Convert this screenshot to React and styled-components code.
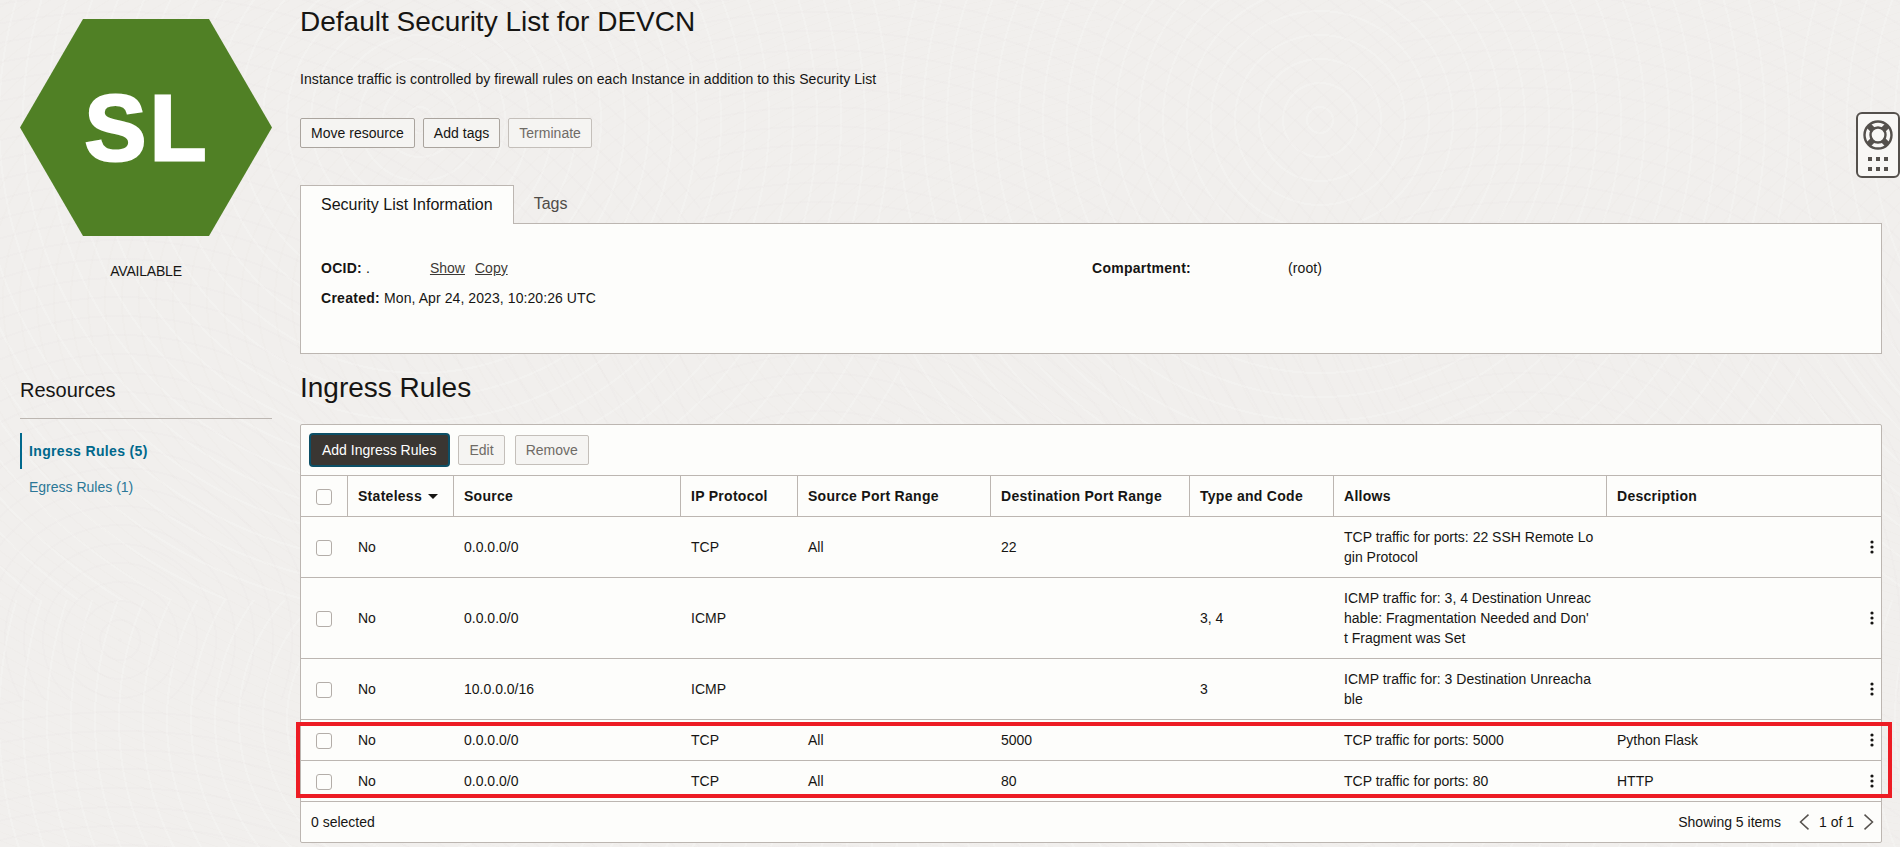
import styled, { createGlobalStyle } from "styled-components";

const FONT = '"Liberation Sans", Arial, sans-serif';
const INK = "#161513";
const LINE = "#bcb6b1";

const GlobalStyle = createGlobalStyle`
  html, body {
    margin: 0;
    height: 847px;
    overflow: hidden;
  }
  body {
    font: 14px/20px ${FONT};
    color: ${INK};
    background-color: #f1efed;
    background-image:
      repeating-radial-gradient(ellipse at 420px 120px, rgba(255,255,255,0) 0 12px, rgba(255,255,255,.16) 12px 14px, rgba(255,255,255,0) 14px 24px),
      repeating-radial-gradient(ellipse at 1500px 300px, rgba(228,225,221,.12) 0 2px, rgba(228,225,221,0) 2px 17px),
      repeating-radial-gradient(circle at 120px 640px, rgba(228,225,221,.14) 0 2px, rgba(228,225,221,0) 2px 19px);
    background-size: 900px 600px, 1100px 847px, 700px 700px;
  }
  * {
    box-sizing: border-box;
  }
`;

const Page = styled.div`
  display: flex;
  width: 1900px;
  height: 847px;
  padding-right: 18px;
`;

const Sidebar = styled.aside`
  flex: none;
  width: 252px;
  margin: 0 28px 0 20px;
  padding-top: 19px;
`;

const Hexagon = styled.div`
  display: flex;
  align-items: center;
  justify-content: center;
  height: 217px;
  padding-left: 3px;
  background: #508025;
  clip-path: polygon(25% 0, 75% 0, 100% 50%, 75% 100%, 25% 100%, 0 50%);
  color: #fff;
  font-size: 92px;
  font-weight: 700;
  line-height: 1;
  letter-spacing: 4px;
  -webkit-text-stroke: 3px #fff;
`;

const Status = styled.div`
  margin-top: 25px;
  text-align: center;
  letter-spacing: -0.2px;
`;

const ResourcesTitle = styled.h2`
  margin: 97px 0 0;
  padding-bottom: 16px;
  border-bottom: 1px solid ${LINE};
  font-size: 20px;
  font-weight: 400;
  line-height: 24px;
`;

const SideNav = styled.nav`
  display: flex;
  flex-direction: column;
  margin-top: 14px;
`;

const SideLink = styled.a`
  height: 36px;
  padding-left: ${({ $active }) => ($active ? "7px" : "9px")};
  border-left: ${({ $active }) => ($active ? "2px solid #00688c" : "none")};
  color: ${({ $active }) => ($active ? "#00688c" : "#2b7797")};
  font-weight: ${({ $active }) => ($active ? 700 : 400)};
  letter-spacing: ${({ $active }) => ($active ? "0.35px" : "0")};
  line-height: 36px;
`;

const Main = styled.main`
  flex: 1;
  min-width: 0;
  position: relative;
`;

const Title = styled.h1`
  margin: 0;
  font-size: 28px;
  font-weight: 400;
  line-height: 44px;
`;

const Lead = styled.p`
  margin: 25px 0 0;
  letter-spacing: 0.07px;
`;

const ButtonRow = styled.div`
  display: flex;
  gap: 8px;
  margin-top: 29px;
`;

const Button = styled.button`
  height: 30px;
  padding: 0 10px;
  border: 1px solid ${({ $disabled }) => ($disabled ? "#c4bfba" : "#aaa49e")};
  border-radius: 2px;
  background: #f5f4f2;
  color: ${({ $disabled }) => ($disabled ? "#6f6b66" : INK)};
  font: 14px ${FONT};
  letter-spacing: 0.02px;
`;

const PrimaryButton = styled.button`
  height: 30px;
  padding: 0 12px 0 11px;
  border: none;
  border-radius: 2px;
  background: #3a3632;
  box-shadow: 0 0 0 2px #0c4f66;
  color: #fff;
  font: 14px ${FONT};
`;

const Tabs = styled.div`
  display: flex;
  height: 39px;
  margin-top: 37px;
  border-bottom: 1px solid ${LINE};
`;

const Tab = styled.div`
  height: 39px;
  padding: 0 20px;
  color: ${({ $active }) => ($active ? INK : "#4f4b47")};
  line-height: 37px;
  font-size: 16px;
  ${({ $active }) =>
    $active &&
    `
    background: #fdfdfb;
    border: 1px solid ${LINE};
    border-bottom: none;
  `}
`;

const InfoPanel = styled.section`
  display: grid;
  grid-template-columns: 771px 1fr;
  grid-auto-rows: 20px;
  row-gap: 10px;
  height: 130px;
  padding: 34px 20px 0;
  background: #fdfdfb;
  border: 1px solid ${LINE};
  border-top: none;
`;

const Field = styled.div`
  display: flex;
  white-space: pre;
`;

const Label = styled.strong`
  margin-right: 4px;
  letter-spacing: 0.28px;
`;

const Mask = styled.span`
  width: ${({ $w }) => $w}px;
`;

const InfoLink = styled.a`
  margin-right: 10px;
  color: #3d3a36;
  text-decoration: underline;
`;

const InfoValue = styled.span`
  letter-spacing: 0.08px;
`;

const SectionTitle = styled.h2`
  margin: 14px 0 16px;
  font-size: 28px;
  font-weight: 400;
  line-height: 40px;
`;

const TableCard = styled.section`
  position: relative;
  width: 1582px;
  height: 419px;
  background: #fdfdfb;
  border: 1px solid ${LINE};
  border-radius: 2px;
`;

const Toolbar = styled.div`
  display: flex;
  align-items: center;
  gap: 10px;
  height: 51px;
  padding: 0 10px;
  border-bottom: 1px solid ${LINE};
`;

const RulesTable = styled.table`
  width: 1580px;
  table-layout: fixed;
  border-collapse: separate;
  border-spacing: 0;
`;

const HeadCell = styled.th`
  height: 41px;
  padding: 0 10px;
  border-bottom: 1px solid ${LINE};
  border-left: 1px solid ${LINE};
  font-weight: 700;
  letter-spacing: 0.28px;
  text-align: left;
  white-space: nowrap;
`;

const PlainHeadCell = styled(HeadCell)`
  padding: 0;
  border-left: none;
`;

const Cell = styled.td`
  padding: 10px 11px;
  border-bottom: 1px solid ${LINE};
  vertical-align: middle;
  word-break: break-all;
  white-space: pre-line;
`;

const CheckCell = styled(Cell)`
  padding: 0;
  text-align: center;
`;

const KebabCell = styled(Cell)`
  padding: 0;
`;

const Check = styled.span`
  display: block;
  width: 16px;
  height: 16px;
  margin: 2px 0 0 15px;
  background: #fdfdfb;
  border: 1px solid #b3ada8;
  border-radius: 3px;
`;

const Caret = styled.span`
  display: inline-block;
  margin: 0 0 2px 6px;
  border-top: 5px solid ${INK};
  border-left: 5px solid transparent;
  border-right: 5px solid transparent;
  vertical-align: middle;
`;

const KebabIcon = styled.svg`
  display: block;
  width: 4px;
  height: 14px;
  margin-left: 20px;
`;

const Footer = styled.div`
  display: flex;
  align-items: center;
  justify-content: space-between;
  height: 40px;
  padding: 0 7px 0 10px;
`;

const Pager = styled.div`
  display: flex;
  align-items: center;
`;

const PagerText = styled.span`
  margin: 0 10px;
`;

const Chevron = styled.svg`
  width: 10px;
  height: 16px;
  margin-left: ${({ $first }) => ($first ? "18px" : "0")};
  fill: none;
  stroke: #55514d;
  stroke-width: 1.5;
`;

const Highlight = styled.div`
  position: absolute;
  top: 297px;
  left: -5px;
  width: 1596px;
  height: 76px;
  border: 4px solid #ed1c24;
  pointer-events: none;
`;

const HelpWidget = styled.div`
  position: fixed;
  top: 112px;
  right: 0;
  display: flex;
  flex-direction: column;
  align-items: center;
  gap: 7px;
  width: 44px;
  height: 66px;
  padding-top: 6px;
  background: #f8f7f5;
  border: 2px solid #54504c;
  border-radius: 6px;
`;

const HelpSvg = styled.svg`
  display: block;
  flex: none;
`;

const COLUMNS = [46, 106, 227, 117, 193, 199, 144, 273, 244, 31];

const RULES = [
  { source: "0.0.0.0/0", protocol: "TCP", srcPort: "All", destPort: "22", type: "", allows: "TCP traffic for ports: 22 SSH Remote Login Protocol", description: "" },
  { source: "0.0.0.0/0", protocol: "ICMP", srcPort: "", destPort: "", type: "3, 4", allows: "ICMP traffic for: 3, 4 Destination Unreachable: Fragmentation Needed and Don'\nt Fragment was Set", description: "" },
  { source: "10.0.0.0/16", protocol: "ICMP", srcPort: "", destPort: "", type: "3", allows: "ICMP traffic for: 3 Destination Unreachable", description: "" },
  { source: "0.0.0.0/0", protocol: "TCP", srcPort: "All", destPort: "5000", type: "", allows: "TCP traffic for ports: 5000", description: "Python Flask" },
  { source: "0.0.0.0/0", protocol: "TCP", srcPort: "All", destPort: "80", type: "", allows: "TCP traffic for ports: 80", description: "HTTP" },
];

function Kebab() {
  return (
    <KebabIcon viewBox="0 0 4 14" fill="#161513">
      <circle cx="2" cy="2" r="1.6" />
      <circle cx="2" cy="7" r="1.6" />
      <circle cx="2" cy="12" r="1.6" />
    </KebabIcon>
  );
}

function LifeRing() {
  return (
    <HelpSvg width="30" height="30" viewBox="0 0 30 30" fill="none" stroke="#54504c">
      <circle cx="15" cy="15" r="13.5" strokeWidth="2.4" />
      <circle cx="15" cy="15" r="7.5" strokeWidth="2.4" />
      <path d="M5.5 5.5 10 10M24.5 5.5 20 10M5.5 24.5 10 20M24.5 24.5 20 20" strokeWidth="6" />
    </HelpSvg>
  );
}

function AppsGrid() {
  return (
    <HelpSvg width="20" height="14" viewBox="0 0 20 14" fill="#54504c">
      {[0, 8, 16].map((x) =>
        [0, 10].map((y) => <rect key={`${x}-${y}`} x={x} y={y} width="4" height="4" />)
      )}
    </HelpSvg>
  );
}

export default function App() {
  return (
    <>
      <GlobalStyle />
      <Page>
        <Sidebar>
          <Hexagon>SL</Hexagon>
          <Status>AVAILABLE</Status>
          <ResourcesTitle>Resources</ResourcesTitle>
          <SideNav>
            <SideLink $active>Ingress Rules (5)</SideLink>
            <SideLink>Egress Rules (1)</SideLink>
          </SideNav>
        </Sidebar>

        <Main>
          <Title>Default Security List for DEVCN</Title>
          <Lead>Instance traffic is controlled by firewall rules on each Instance in addition to this Security List</Lead>
          <ButtonRow>
            <Button>Move resource</Button>
            <Button>Add tags</Button>
            <Button $disabled>Terminate</Button>
          </ButtonRow>

          <Tabs>
            <Tab $active>Security List Information</Tab>
            <Tab>Tags</Tab>
          </Tabs>
          <InfoPanel>
            <Field>
              <Label>OCID:</Label>
              <span>.</span>
              <Mask $w={60} />
              <InfoLink>Show</InfoLink>
              <InfoLink>Copy</InfoLink>
            </Field>
            <Field>
              <Label>Compartment:</Label>
              <Mask $w={93} />
              <InfoValue>(root)</InfoValue>
            </Field>
            <Field>
              <Label>Created:</Label>
              <InfoValue>Mon, Apr 24, 2023, 10:20:26 UTC</InfoValue>
            </Field>
          </InfoPanel>

          <SectionTitle>Ingress Rules</SectionTitle>
          <TableCard>
            <Toolbar>
              <PrimaryButton>Add Ingress Rules</PrimaryButton>
              <Button $disabled>Edit</Button>
              <Button $disabled>Remove</Button>
            </Toolbar>
            <RulesTable>
              <colgroup>
                {COLUMNS.map((width, i) => (
                  <col key={i} width={width} />
                ))}
              </colgroup>
              <thead>
                <tr>
                  <PlainHeadCell>
                    <Check />
                  </PlainHeadCell>
                  <HeadCell>
                    Stateless
                    <Caret />
                  </HeadCell>
                  <HeadCell>Source</HeadCell>
                  <HeadCell>IP Protocol</HeadCell>
                  <HeadCell>Source Port Range</HeadCell>
                  <HeadCell>Destination Port Range</HeadCell>
                  <HeadCell>Type and Code</HeadCell>
                  <HeadCell>Allows</HeadCell>
                  <HeadCell>Description</HeadCell>
                  <PlainHeadCell />
                </tr>
              </thead>
              <tbody>
                {RULES.map((rule, i) => (
                  <tr key={i}>
                    <CheckCell>
                      <Check />
                    </CheckCell>
                    <Cell>No</Cell>
                    <Cell>{rule.source}</Cell>
                    <Cell>{rule.protocol}</Cell>
                    <Cell>{rule.srcPort}</Cell>
                    <Cell>{rule.destPort}</Cell>
                    <Cell>{rule.type}</Cell>
                    <Cell>{rule.allows}</Cell>
                    <Cell>{rule.description}</Cell>
                    <KebabCell>
                      <Kebab />
                    </KebabCell>
                  </tr>
                ))}
              </tbody>
            </RulesTable>
            <Footer>
              <span>0 selected</span>
              <Pager>
                <span>Showing 5 items</span>
                <Chevron $first viewBox="0 0 10 16">
                  <path d="M9.5.6 1.5 8l8 7.4" />
                </Chevron>
                <PagerText>1 of 1</PagerText>
                <Chevron viewBox="0 0 10 16">
                  <path d="m.5.6 8 7.4-8 7.4" />
                </Chevron>
              </Pager>
            </Footer>
            <Highlight />
          </TableCard>
        </Main>

        <HelpWidget>
          <LifeRing />
          <AppsGrid />
        </HelpWidget>
      </Page>
    </>
  );
}
